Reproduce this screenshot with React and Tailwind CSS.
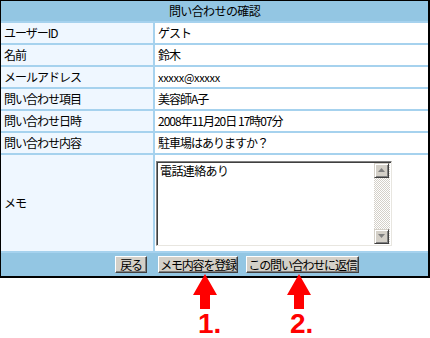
import React from "react";

const rows = [
  ["ユーザーID", "ゲスト"],
  ["名前", "鈴木"],
  ["メールアドレス", "xxxxx@xxxxx"],
  ["問い合わせ項目", "美容師A子"],
  ["問い合わせ日時", "2008年11月20日 17時07分"],
  ["問い合わせ内容", "駐車場はありますか？"],
];

function Btn({ children, w }) {
  return (
    <div
      className={`${w} h-[17px] bg-[#d4d0c8] border-t border-l border-t-white border-l-white border-r border-b border-r-[#404040] border-b-[#404040] shadow-[inset_-1px_-1px_0_#808080] flex items-center justify-center text-[12px] tracking-[-1.2px] leading-none text-black whitespace-nowrap`}
    >
      {children}
    </div>
  );
}

function ScrollBtn({ up }) {
  return (
    <div className="w-[15px] h-[15px] bg-[#d4d0c8] border-t border-l border-t-[#d4d0c8] border-l-[#d4d0c8] border-r border-b border-r-[#404040] border-b-[#404040] shadow-[inset_1px_1px_0_#ffffff,inset_-1px_-1px_0_#808080] flex items-center justify-center">
      <svg width="7" height="4" viewBox="0 0 7 4">
        {up ? (
          <polygon points="3.5,0 7,4 0,4" fill="#808080" />
        ) : (
          <polygon points="0,0 7,0 3.5,4" fill="#808080" />
        )}
      </svg>
    </div>
  );
}

export default function App() {
  return (
    <div
      className="relative w-[430px] h-[338px] bg-white text-black"
      style={{ fontFamily: '"Noto Sans CJK JP", "Liberation Sans", sans-serif' }}
    >
      <div className="w-[430px] border-l border-t border-l-black border-t-black border-r-2 border-b-2 border-r-black border-b-black bg-[#a6d2ee] flex flex-col gap-[2px]">
        <div className="h-[20px] bg-[#93c6e3] flex items-center justify-center text-[12px] tracking-[-0.6px] leading-none">
          問い合わせの確認
        </div>
        <div className="grid grid-cols-[152px_1fr] gap-[2px]">
          {rows.map(([k, v]) => (
            <React.Fragment key={k}>
              <div className="h-[20px] bg-[#eff7ff] flex items-center pl-[3px] text-[12px] tracking-[-1px] leading-none">
                {k}
              </div>
              <div
                className={`h-[20px] bg-white flex items-center pl-[3px] leading-none ${
                  k === "メールアドレス"
                    ? "text-[11px] tracking-[-0.3px]"
                    : "text-[12px] tracking-[-1px]"
                }`}
              >
                {v}
              </div>
            </React.Fragment>
          ))}
          <div className="h-[96px] bg-[#eff7ff] flex items-center pl-[3px] text-[12px] tracking-[-1px] leading-none">
            メモ
          </div>
          <div className="h-[96px] bg-white flex items-center pl-[1px]">
            <div className="w-[236px] h-[85px] flex border-t border-l border-t-[#808080] border-l-[#808080] border-r border-b border-r-[#e8e6e0] border-b-[#e8e6e0] shadow-[inset_1px_1px_0_#404040] bg-white">
              <div className="flex-1 pl-[3px] pt-[2px] text-[12px] leading-[14px] tracking-[-0.6px]">
                電話連絡あり
              </div>
              <div className="w-[16px] flex flex-col mt-[1px] mb-[1px] mr-[1px] bg-[repeating-conic-gradient(#d4d0c8_0_25%,#ffffff_0_50%)] bg-[length:2px_2px]">
                <ScrollBtn up />
                <div className="flex-1" />
                <ScrollBtn />
              </div>
            </div>
          </div>
        </div>
        <div className="h-[23px] bg-[#93c6e3] grid grid-cols-[152px_1fr] gap-[2px]">
          <div className="flex items-center justify-end pr-[6px]">
            <Btn w="w-[32px]">戻る</Btn>
          </div>
          <div className="flex items-center gap-[8px] pl-[3px]">
            <Btn w="w-[80px]">メモ内容を登録</Btn>
            <Btn w="w-[113px]">この問い合わせに返信</Btn>
          </div>
        </div>
      </div>

      <svg
        className="absolute left-0 top-0 pointer-events-none"
        width="430"
        height="338"
        viewBox="0 0 430 338"
      >
        <polygon
          points="205,274 217,295 210,295 210,309 200,309 200,295 193,295"
          fill="#ff0000"
        />
        <polygon
          points="299,274 311,295 304,295 304,309 294,309 294,295 287,295"
          fill="#ff0000"
        />
      </svg>
      <div
        className="absolute left-[198px] top-[310px] text-[28px] font-bold leading-[28px] text-[#ff0000]"
        style={{ fontFamily: '"Liberation Sans", sans-serif' }}
      >
        1.
      </div>
      <div
        className="absolute left-[290px] top-[310px] text-[28px] font-bold leading-[28px] text-[#ff0000]"
        style={{ fontFamily: '"Liberation Sans", sans-serif' }}
      >
        2.
      </div>
    </div>
  );
}
